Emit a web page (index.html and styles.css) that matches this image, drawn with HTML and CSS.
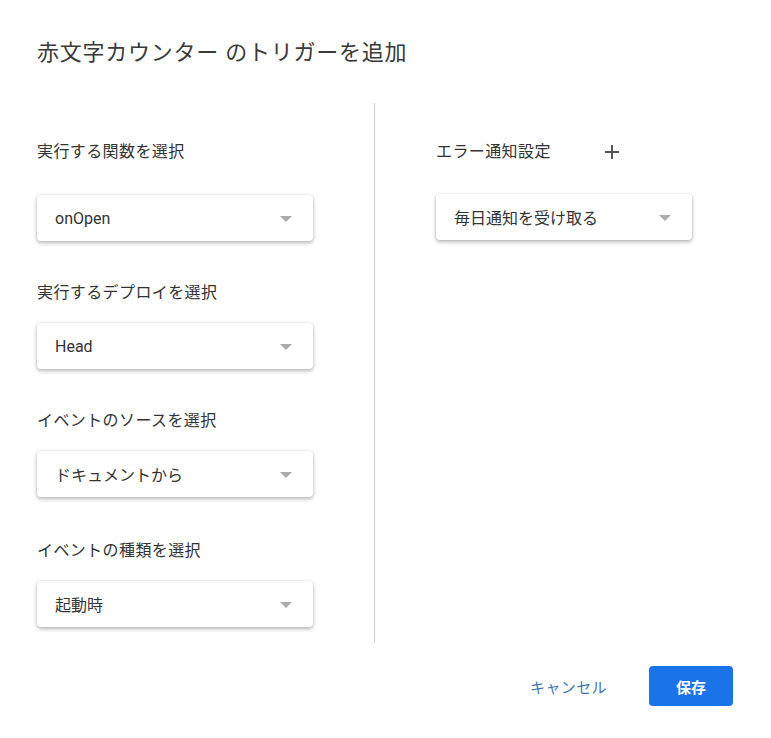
FILE: index.html
```html
<!DOCTYPE html>
<html lang="ja">
<head>
<meta charset="utf-8">
<link rel="stylesheet" href="styles.css">
</head>
<body>
<div class="dialog">
  <h1 class="title">赤文字カウンター のトリガーを追加</h1>
  <div class="columns">
    <div class="col-left">
      <div class="group first">
        <div class="label">実行する関数を選択</div>
        <div class="select"><span>onOpen</span><i class="arrow"></i></div>
      </div>
      <div class="group">
        <div class="label">実行するデプロイを選択</div>
        <div class="select"><span>Head</span><i class="arrow"></i></div>
      </div>
      <div class="group">
        <div class="label">イベントのソースを選択</div>
        <div class="select"><span>ドキュメントから</span><i class="arrow"></i></div>
      </div>
      <div class="group">
        <div class="label">イベントの種類を選択</div>
        <div class="select"><span>起動時</span><i class="arrow"></i></div>
      </div>
    </div>
    <div class="col-right">
      <div class="label-row">
        <div class="label">エラー通知設定</div>
        <svg class="plus" width="16" height="16" viewBox="0 0 16 16"><path d="M8 1v14M1 8h14" stroke="#555" stroke-width="2" fill="none"/></svg>
      </div>
      <div class="select narrow"><span>毎日通知を受け取る</span><i class="arrow"></i></div>
    </div>
  </div>
  <div class="footer">
    <button class="btn-text">キャンセル</button>
    <button class="btn-primary">保存</button>
  </div>
</div>
</body>
</html>
```

FILE: styles.css
```css
html, body {
  margin: 0;
  padding: 0;
  background: #fff;
}
body {
  font-family: "Roboto", "Noto Sans CJK JP", sans-serif;
  color: #333;
}
.dialog {
  width: 771px;
  height: 738px;
  box-sizing: border-box;
  padding: 38px 0 0 37px;
}
.title {
  margin: 0;
  font-size: 22px;
  font-weight: 400;
  line-height: 30px;
  color: #3a3a3a;
  letter-spacing: 0.75px;
}
.columns {
  display: flex;
  margin-top: 35px;
  height: 540px;
}
.col-left {
  width: 338px;
  padding-top: 39px;
  border-right: 1px solid #cfcfcf;
  box-sizing: border-box;
}
.group {
  margin-top: 42px;
}
.group:last-child {
  margin-top: 44px;
}
.group.first {
  margin-top: 0;
}
.group.first .label {
  margin-bottom: 33px;
}
.label {
  font-size: 16px;
  line-height: 20px;
  color: #333;
  letter-spacing: 0.4px;
  margin-bottom: 20px;
}
.select {
  width: 276px;
  height: 46px;
  box-sizing: border-box;
  border-radius: 4px;
  background: #fff;
  box-shadow: 0 2px 4px rgba(0,0,0,0.28), 0 0 2px rgba(0,0,0,0.12);
  display: flex;
  align-items: center;
  justify-content: space-between;
  padding: 0 21px 0 18px;
  font-size: 16px;
  color: #333;
}
.select.narrow {
  width: 256px;
}
.arrow {
  width: 0;
  height: 0;
  border-left: 6px solid transparent;
  border-right: 6px solid transparent;
  border-top: 6px solid #ababab;
  margin-top: 2px;
}
.col-right {
  padding: 39px 0 0 61px;
}
.label-row {
  display: flex;
  align-items: center;
  margin-bottom: 32px;
}
.label-row .label {
  margin-bottom: 0;
}
.plus {
  margin-left: 53px;
}
.footer {
  display: flex;
  justify-content: flex-end;
  align-items: center;
  margin-top: 23px;
  padding-right: 38px;
}
button {
  font-family: "Roboto", "Noto Sans CJK JP", sans-serif;
  border: none;
  cursor: pointer;
}
.btn-text {
  background: none;
  color: #3f78b2;
  font-size: 15px;
  padding: 0;
  margin-right: 42px;
  letter-spacing: 0.4px;
}
.btn-primary {
  background: #1a73e8;
  color: #fff;
  font-size: 15px;
  font-weight: 700;
  width: 84px;
  height: 40px;
  border-radius: 4px;
}
```
